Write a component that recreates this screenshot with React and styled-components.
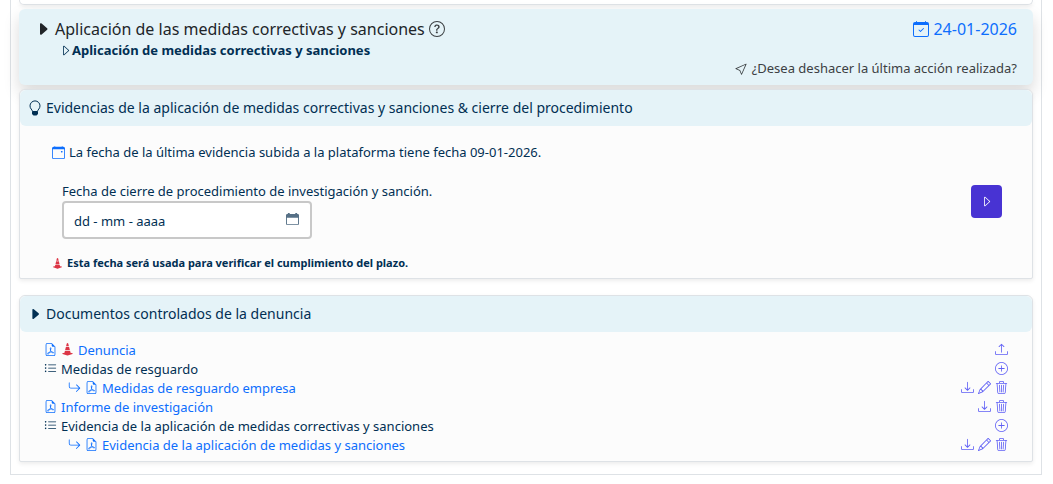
import React, { useState } from "react";
import styled, { createGlobalStyle } from "styled-components";
import {
  BsCaretRightFill, BsCaretRight, BsQuestionCircle, BsCalendarCheck, BsCalendarEvent,
  BsCursor, BsFileEarmarkPdf, BsListUl, BsArrowReturnRight, BsUpload,
  BsPlusCircle, BsDownload, BsPencil, BsTrash3, BsConeStriped,
} from "react-icons/bs";

const GlobalStyle = createGlobalStyle`
  *, *::before, *::after { box-sizing: border-box; }
  body {
    margin: 0;
    background: #fff;
    color: #012f53;
    font-family: "Noto Sans", "Liberation Sans", sans-serif;
    font-size: 13px;
    line-height: 20px;
  }
  svg { display: block; flex: none; }
`;

const Frame = styled.main`
  margin: 0 11px 9px 10px;
  padding: 0 8px 12px;
  border: 1px solid #dee2e6;
  border-top: 0;
`;

const Card = styled.section`
  border: 1px solid #dee2e6;
  border-radius: 6px 6px 2px 2px;
  background: #fcfcfc;
  box-shadow: 0 2px 4px rgba(0, 0, 0, 0.075);
  margin-bottom: ${(p) => (p.$last ? 0 : 16)}px;
`;

const PreviousCard = styled.div`
  height: 5px;
  margin-bottom: 4px;
  border: 1px solid #dee2e6;
  border-top: 0;
  border-radius: 0 0 6px 6px;
  background: #fff;
  box-shadow: 0 2px 4px rgba(0, 0, 0, 0.075);
`;

const Banner = styled.header`
  display: flex;
  justify-content: space-between;
  min-height: 76px;
  margin-bottom: 4px;
  padding: 8px 16px 7px;
  border-radius: 6px;
  background: #e5f3f8;
  box-shadow: 0 8px 16px rgba(0, 0, 0, 0.15);
`;

const BannerSide = styled.div`
  display: flex;
  flex-direction: column;
  justify-content: ${(p) => (p.$end ? "space-between" : "flex-start")};
  align-items: ${(p) => (p.$end ? "flex-end" : "flex-start")};
`;

const Title = styled.h1`
  display: flex;
  align-items: center;
  gap: 4px;
  margin: 0;
  color: #212529;
  font-size: 16px;
  font-weight: 400;
  line-height: 24px;
`;

const Subtitle = styled.h2`
  display: flex;
  align-items: center;
  margin: 0 0 0 24px;
  font-size: 13px;
  font-weight: 700;
  line-height: 18px;
`;

const HelpButton = styled.button`
  padding: 0;
  border: 0;
  background: none;
  color: #3c4043;
  cursor: pointer;
`;

const DateLink = styled.a`
  display: flex;
  align-items: center;
  gap: 4px;
  color: #0d6efd;
  font-size: 16px;
  line-height: 24px;
  text-decoration: none;
`;

const UndoLink = styled.a`
  display: flex;
  align-items: center;
  gap: 4px;
  color: #3c4043;
  text-decoration: none;
`;

const CardHeader = styled.h2`
  display: flex;
  align-items: center;
  gap: 4px;
  height: 36px;
  margin: 0;
  padding: 0 8px;
  border-radius: 6px;
  background: #e5f3f8;
  font-size: 14px;
  font-weight: 400;
`;

const FormBody = styled.form`
  display: flex;
  align-items: center;
  justify-content: space-between;
  padding: 16px 30px 5px 32px;
`;

const Notice = styled.p`
  display: flex;
  align-items: center;
  gap: 4px;
  margin: 0;
`;

const Field = styled.div`
  width: 250px;
  margin: 19px 0 14px 10px;
`;

const Label = styled.label`
  display: block;
  white-space: nowrap;
`;

const DateBox = styled.div`
  display: flex;
  align-items: center;
  height: 38px;
  padding: 1px 11px 0 10px;
  border: 2px solid #c8c8c8;
  border-radius: 4px;
  background: #fff;
`;

const DateInput = styled.input`
  flex: 1;
  min-width: 0;
  padding: 0;
  border: 0;
  outline: 0;
  background: none;
  color: #012f53;
  font: inherit;
  &::placeholder { color: #012f53; opacity: 1; }
`;

const PickerButton = styled.button`
  padding: 0 0 2px;
  border: 0;
  background: none;
  color: #567086;
  cursor: pointer;
`;

const Warning = styled(Notice)`
  font-size: 11px;
  font-weight: 700;
  svg { color: #dc3545; }
`;

const SubmitButton = styled.button`
  display: flex;
  align-items: center;
  justify-content: center;
  width: 31px;
  height: 33px;
  margin-bottom: 12px;
  padding: 0;
  border: 0;
  border-radius: 4px;
  background: #4833d3;
  color: #fff;
  cursor: pointer;
`;

const DocumentList = styled.ul`
  margin: 0;
  padding: 8px 24px 7px;
  list-style: none;
`;

const DocumentRow = styled.li`
  display: flex;
  align-items: center;
  justify-content: space-between;
  height: 19px;
  padding-left: ${(p) => (p.$nested ? 24 : 0)}px;
`;

const DocumentName = styled.span`
  display: flex;
  align-items: center;
  gap: 4px;
`;

const DocumentLink = styled.a`
  display: flex;
  align-items: center;
  gap: 4px;
  color: #0d6efd;
  text-decoration: none;
`;

const Alert = styled(BsConeStriped)`
  color: #dc3545;
`;

const Actions = styled.span`
  display: flex;
  gap: 4px;
`;

const ActionButton = styled.button`
  padding: 0;
  border: 0;
  background: none;
  color: #5f5ff5;
  cursor: pointer;
`;

function BulbIcon() {
  return (
    <svg width="14" height="16" viewBox="0 0 14 16" fill="none" stroke="currentColor" aria-hidden="true">
      <path d="M4.5 11.5C4.3 9.6 2 8.700 2 5.900a5 5 0 0 1 10 0c0 2.800-2.300 3.700-2.500 5.600z" />
      <path d="M4 11.500h6v2.500l-1.500 1.500h-3L4 14z" fill="currentColor" stroke="none" />
    </svg>
  );
}

function PickerIcon() {
  return (
    <svg width="13" height="13" viewBox="0 0 14 14" fill="currentColor" aria-hidden="true">
      <path fillRule="evenodd" d="M2 0h2v1h6V0h2v1h1l1 1v10l-1 1H1l-1-1V2l1-1h1zM1 5v7h12V5z" />
    </svg>
  );
}

const actionTypes = {
  upload: [BsUpload, "Subir"],
  add: [BsPlusCircle, "Agregar"],
  download: [BsDownload, "Descargar"],
  edit: [BsPencil, "Editar"],
  remove: [BsTrash3, "Eliminar"],
};

const documents = [
  { name: "Denuncia", alert: true, actions: ["upload"] },
  { name: "Medidas de resguardo", group: true, actions: ["add"] },
  { name: "Medidas de resguardo empresa", nested: true, actions: ["download", "edit", "remove"] },
  { name: "Informe de investigación", actions: ["download", "remove"] },
  { name: "Evidencia de la aplicación de medidas correctivas y sanciones", group: true, actions: ["add"] },
  { name: "Evidencia de la aplicación de medidas y sanciones", nested: true, actions: ["download", "edit", "remove"] },
];

function DocumentItem({ name, alert, group, nested, actions }) {
  return (
    <DocumentRow $nested={nested}>
      {group ? (
        <DocumentName><BsListUl size={13} />{name}</DocumentName>
      ) : (
        <DocumentLink href="#">
          {nested && <BsArrowReturnRight size={13} />}
          <BsFileEarmarkPdf size={13} />
          {alert && <Alert size={13} />}
          {name}
        </DocumentLink>
      )}
      <Actions>
        {actions.map((key) => {
          const [Icon, label] = actionTypes[key];
          return <ActionButton key={key} type="button" aria-label={label}><Icon size={13} /></ActionButton>;
        })}
      </Actions>
    </DocumentRow>
  );
}

export default function App() {
  const [date, setDate] = useState("");
  return (
    <>
      <GlobalStyle />
      <Frame>
        <PreviousCard />
        <Banner>
          <BannerSide>
            <Title>
              <BsCaretRightFill size={16} />
              Aplicación de las medidas correctivas y sanciones
              <HelpButton type="button" aria-label="Ayuda"><BsQuestionCircle size={16} /></HelpButton>
            </Title>
            <Subtitle><BsCaretRight size={13} />Aplicación de medidas correctivas y sanciones</Subtitle>
          </BannerSide>
          <BannerSide $end>
            <DateLink href="#"><BsCalendarCheck size={16} />24-01-2026</DateLink>
            <UndoLink href="#"><BsCursor size={13} />¿Desea deshacer la última acción realizada?</UndoLink>
          </BannerSide>
        </Banner>
        <Card>
          <CardHeader>
            <BulbIcon />
            Evidencias de la aplicación de medidas correctivas y sanciones &amp; cierre del procedimiento
          </CardHeader>
          <FormBody onSubmit={(e) => e.preventDefault()}>
            <div>
              <Notice>
                <BsCalendarEvent size={13} color="#0d6efd" />
                La fecha de la última evidencia subida a la plataforma tiene fecha 09-01-2026.
              </Notice>
              <Field>
                <Label htmlFor="cierre">Fecha de cierre de procedimiento de investigación y sanción.</Label>
                <DateBox>
                  <DateInput id="cierre" placeholder="dd - mm - aaaa" value={date} onChange={(e) => setDate(e.target.value)} />
                  <PickerButton type="button" aria-label="Abrir calendario"><PickerIcon /></PickerButton>
                </DateBox>
              </Field>
              <Warning><BsConeStriped size={11} />Esta fecha será usada para verificar el cumplimiento del plazo.</Warning>
            </div>
            <SubmitButton type="submit" aria-label="Enviar"><BsCaretRight size={13} /></SubmitButton>
          </FormBody>
        </Card>
        <Card $last>
          <CardHeader>
            <BsCaretRightFill size={14} />
            Documentos controlados de la denuncia
          </CardHeader>
          <DocumentList>
            {documents.map((d) => <DocumentItem key={d.name} {...d} />)}
          </DocumentList>
        </Card>
      </Frame>
    </>
  );
}
